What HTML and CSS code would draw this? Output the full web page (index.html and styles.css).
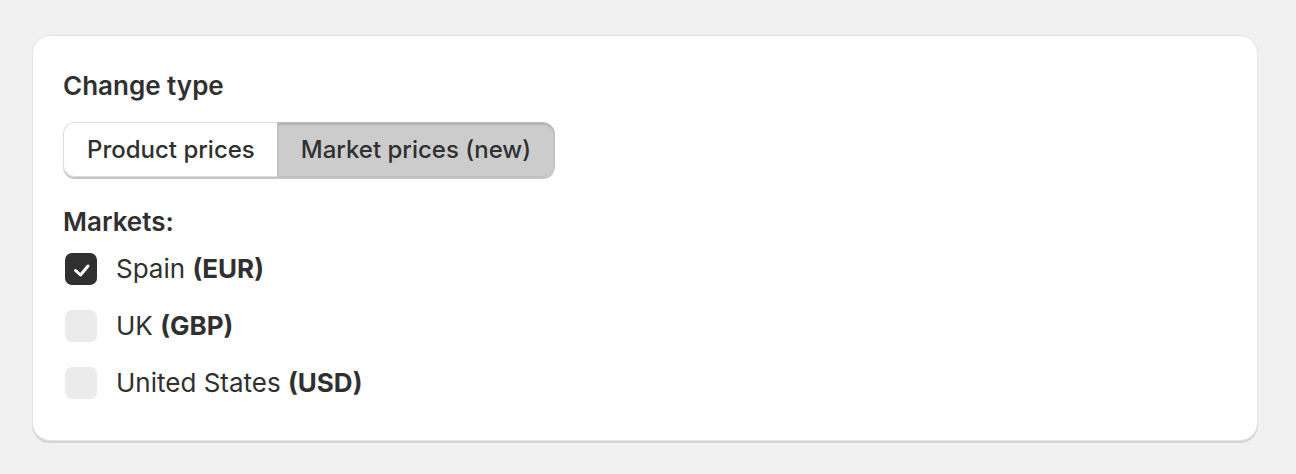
FILE: index.html
```html
<!DOCTYPE html>
<html lang="en">
<head>
<meta charset="utf-8">
<title>Change type</title>
<link rel="stylesheet" href="styles.css">
</head>
<body>
  <main class="page">
    <section class="card">
      <h2 class="heading">Change type</h2>
      <div class="segmented">
        <button class="segment">Product prices</button>
        <button class="segment segment--active">Market prices (new)</button>
      </div>
      <h3 class="heading heading--markets">Markets:</h3>
      <ul class="options">
        <li class="option">
          <span class="box box--checked">
            <svg viewBox="0 0 32 32" width="32" height="32"><path d="M10.5 17.5l5 4.5 7.5-9" fill="none" stroke="#fff" stroke-width="3" stroke-linecap="round" stroke-linejoin="round"/></svg>
          </span>
          <span class="label">Spain <b>(EUR)</b></span>
        </li>
        <li class="option">
          <span class="box"></span>
          <span class="label">UK <b>(GBP)</b></span>
        </li>
        <li class="option">
          <span class="box"></span>
          <span class="label">United States <b>(USD)</b></span>
        </li>
      </ul>
    </section>
  </main>
</body>
</html>
```

FILE: styles.css
```css
* { box-sizing: border-box; }
html, body { margin: 0; padding: 0; }
body {
  background: #f1f1f1;
  font-family: Inter, "Noto Sans", "Liberation Sans", sans-serif;
  color: #303030;
  width: 1296px;
  height: 474px;
  overflow: hidden;
}
.page {
  padding: 35px 38px 0 32px;
}
.card {
  background: #fff;
  border: 1px solid #e3e3e3;
  border-radius: 18px;
  box-shadow: 0 2px 0 #d4d4d4;
  padding: 34px 31px 41px 30px;
  height: 406px;
}
.heading {
  margin: 0;
  font-size: 26px;
  line-height: 32px;
  font-weight: 600;
}
.segmented {
  display: inline-flex;
  margin-top: 20px;
  height: 55px;
  border-radius: 12px;
  box-shadow: 0 2px 0 #c4c4c4;
}
.segment {
  font-family: inherit;
  font-size: 24px;
  font-weight: 500;
  color: #303030;
  height: 55px;
  padding: 0 22px 0 23px;
  background: #fff;
  border: 1px solid #dcdcdc;
  margin: 0;
  cursor: pointer;
}
.segment:first-child {
  border-radius: 12px 0 0 12px;
  border-right: none;
}
.segment--active {
  background: #cccccc;
  border-color: #bdbdbd;
  border-radius: 0 12px 12px 0;
  box-shadow: inset 0 2px 1px rgba(0,0,0,0.12);
  padding: 0 23px;
}
.heading--markets {
  margin-top: 29px;
}
.options {
  list-style: none;
  margin: 15px 0 0 0;
  padding: 0;
  display: flex;
  flex-direction: column;
  gap: 25px;
}
.option {
  display: flex;
  align-items: center;
  gap: 19px;
  padding-left: 2px;
}
.box {
  width: 32px;
  height: 32px;
  border-radius: 7px;
  background: #ebebeb;
  display: block;
  flex: none;
}
.box--checked {
  background: #303030;
}
.box svg { display: block; }
.label {
  font-size: 26px;
  line-height: 32px;
  font-weight: 400;
}
.label b { font-weight: 700; }
```
